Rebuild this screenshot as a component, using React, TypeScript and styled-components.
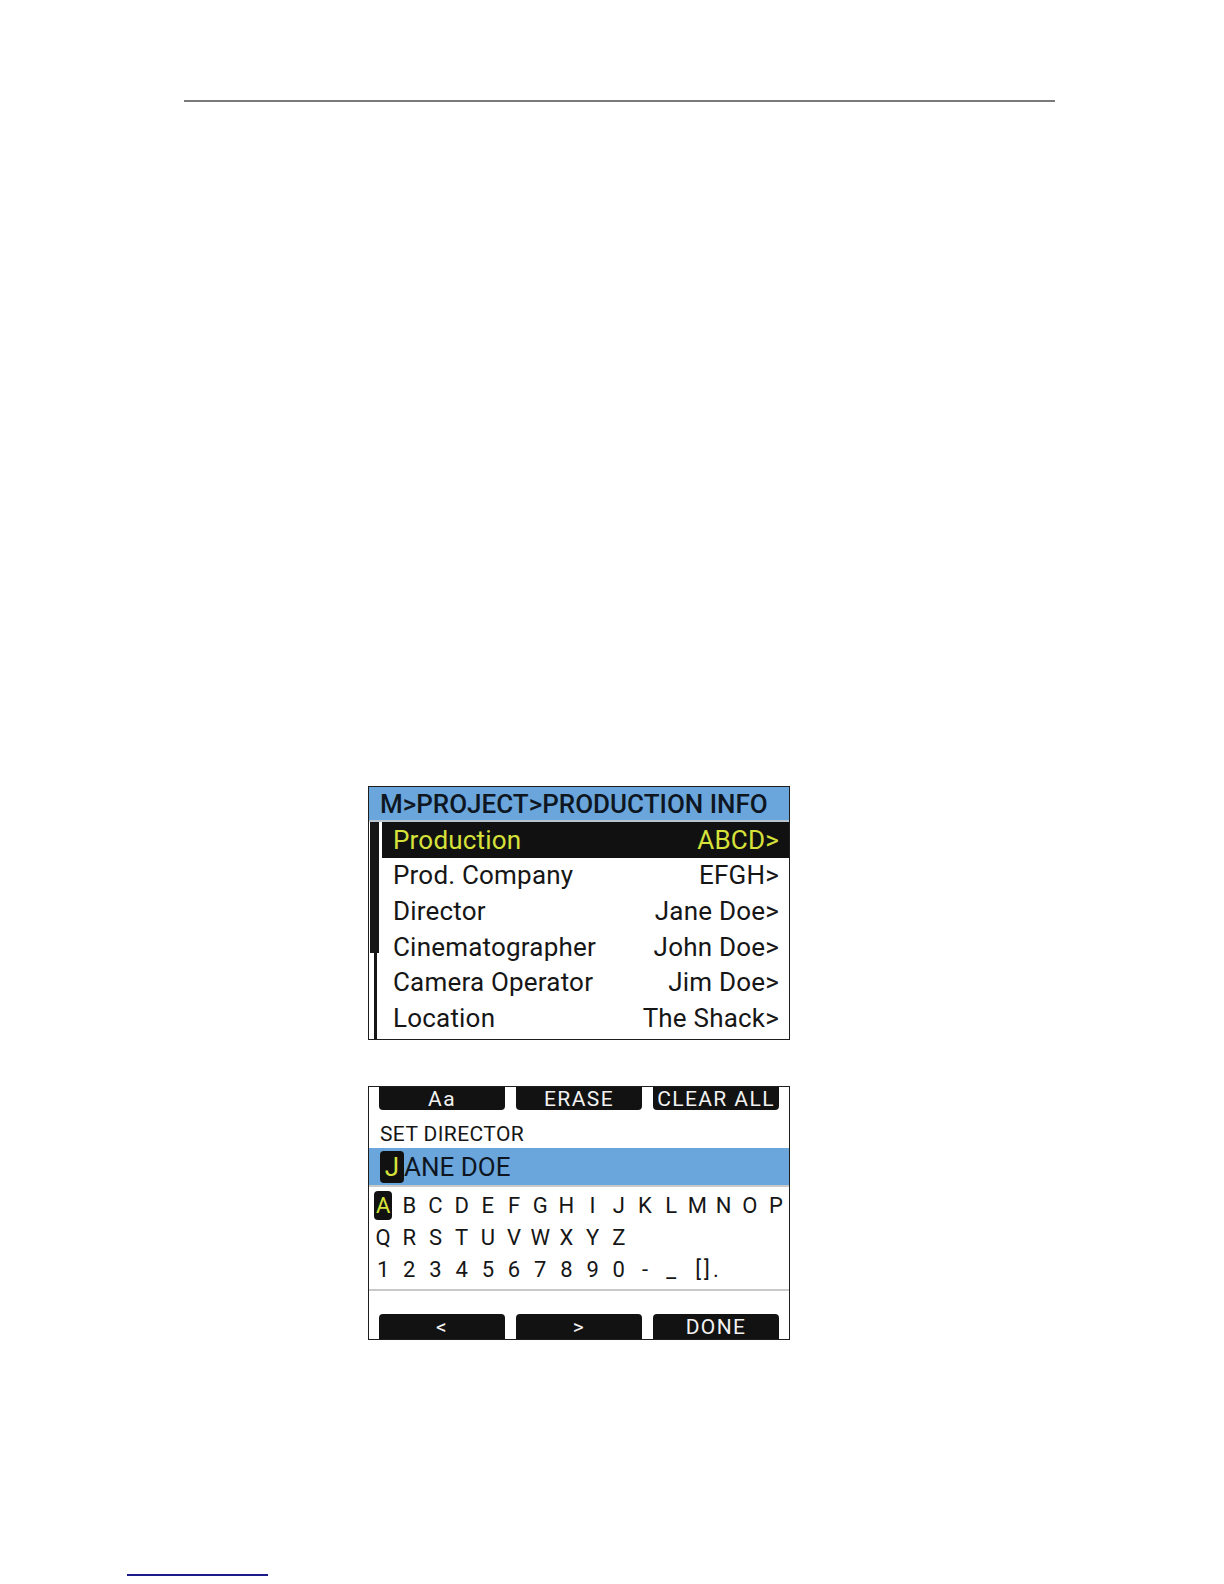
import React from "react";
import styled, {createGlobalStyle} from "styled-components";

const Blue = "#6aa6dc";
const Yellow = "#d6e13a";
const Ink = "#161616";
const Rule = "#c9c9c9";

const GlobalStyle = createGlobalStyle`
  html, body {
    margin: 0;
    padding: 0;
    background: #ffffff;
    overflow: hidden;
  }
  body {
    font-family: Roboto, "Liberation Sans", sans-serif;
    color: ${Ink};
  }
`;

const Page = styled.div`
  width: 1224px;
  height: 1584px;
  display: flex;
  flex-direction: column;
  padding-top: 100px;
  box-sizing: border-box;
  overflow: hidden;
`;

const HeaderRule = styled.hr`
  margin: 0 0 0 184px;
  width: 871px;
  height: 2px;
  border: none;
  background: #7a7a7a;
`;

const Screens = styled.div`
  display: flex;
  flex-direction: column;
  align-items: flex-start;
  padding-left: 368px;
  margin-top: 684px;
  gap: 46px;
`;

const Screen = styled.div`
  width: 422px;
  height: 254px;
  box-sizing: border-box;
  border: 1px solid #1e1e1e;
  display: flex;
  flex-direction: column;
  overflow: hidden;
  background: #fff;
`;

// --- menu screen ---

const MenuTitle = styled.div`
  height: 33px;
  flex-shrink: 0;
  background: ${Blue};
  border-bottom: 2px solid #b9c6cf;
  padding-left: 11px;
  display: flex;
  align-items: center;
  font-size: 26px;
  font-weight: 500;
  letter-spacing: 0;
  color: #0e1622;
`;

const MenuBody = styled.div`
  flex: 1;
  display: flex;
`;

const ScrollTrack = styled.div`
  width: 13px;
  flex-shrink: 0;
  position: relative;

  &::before {
    content: "";
    position: absolute;
    left: 5px;
    top: 0;
    bottom: 0;
    width: 3px;
    background: ${Ink};
  }
`;

const ScrollThumb = styled.div`
  position: absolute;
  left: 1px;
  top: 0;
  width: 9px;
  height: 131px;
  background: ${Ink};
`;

const MenuList = styled.ul`
  list-style: none;
  margin: 0;
  padding: 0;
  flex: 1;
  display: flex;
  flex-direction: column;
`;

const MenuRow = styled.li<{$selected?: boolean}>`
  height: 35.6px;
  display: flex;
  align-items: center;
  justify-content: space-between;
  padding: 0 10px 0 11px;
  font-size: 26px;
  letter-spacing: 0.2px;
  background: ${p => (p.$selected ? "#111" : "transparent")};
  color: ${p => (p.$selected ? Yellow : Ink)};
`;

// --- keyboard screen ---

const ButtonRow = styled.div<{$bottom?: boolean}>`
  display: flex;
  gap: 11px;
  padding: 0 10px;
  margin-top: ${p => (p.$bottom ? "auto" : "0")};
`;

const SoftKey = styled.div<{$bottom?: boolean}>`
  flex: 1;
  height: ${p => (p.$bottom ? "25px" : "23px")};
  background: #121212;
  color: #f2f2f2;
  border-radius: ${p => (p.$bottom ? "4px 4px 0 0" : "0 0 4px 4px")};
  display: flex;
  align-items: center;
  justify-content: center;
  font-size: 21px;
  letter-spacing: 1.4px;
`;

const Prompt = styled.div`
  height: 38px;
  box-sizing: border-box;
  display: flex;
  align-items: flex-end;
  padding: 0 0 2px 11px;
  font-size: 21px;
  letter-spacing: 0.4px;
`;

const InputBar = styled.div`
  height: 37px;
  background: ${Blue};
  border-bottom: 2px solid ${Rule};
  display: flex;
  align-items: center;
  padding-left: 11px;
  font-size: 26px;
  color: #0e1622;
`;

const Cursor = styled.span`
  display: inline-flex;
  align-items: center;
  justify-content: center;
  width: 24px;
  height: 32px;
  border-radius: 4px;
  background: #111;
  color: ${Yellow};
`;

const KeyGrid = styled.div`
  display: grid;
  grid-template-columns: repeat(16, 1fr);
  grid-auto-rows: 32px;
  padding: 2px 0 0 1px;
  border-bottom: 2px solid ${Rule};
  height: 104px;
  box-sizing: border-box;
  align-content: start;
`;

const Key = styled.span<{$active?: boolean; $wide?: boolean}>`
  display: flex;
  align-items: center;
  justify-content: ${p => (p.$wide ? "flex-start" : "center")};
  font-size: 22px;
  letter-spacing: ${p => (p.$wide ? "3px" : "0")};
  ${p => p.$wide && "grid-column: span 2; padding-left: 9px;"}

  & > i {
    font-style: normal;
    display: inline-flex;
    align-items: center;
    justify-content: center;
    padding: 0 2px;
    height: 29px;
    border-radius: 4px;
    background: ${p => (p.$active ? "#111" : "transparent")};
    color: ${p => (p.$active ? Yellow : Ink)};
  }
`;

const FooterLink = styled.div`
  margin: 234px 0 0 127px;
  width: 141px;
  height: 2px;
  background: #1b1b8c;
`;

const menuItems = [
    {label: "Production", value: "ABCD>"},
    {label: "Prod. Company", value: "EFGH>"},
    {label: "Director", value: "Jane Doe>"},
    {label: "Cinematographer", value: "John Doe>"},
    {label: "Camera Operator", value: "Jim Doe>"},
    {label: "Location", value: "The Shack>"},
];

const keyRows = [
    "ABCDEFGHIJKLMNOP".split(""),
    "QRSTUVWXYZ".split(""),
    "1234567890-_".split(""),
];

const App = () => {
    return (<>
        <GlobalStyle/>
        <Page>
            <HeaderRule/>
            <Screens>
                <Screen>
                    <MenuTitle>M&gt;PROJECT&gt;PRODUCTION INFO</MenuTitle>
                    <MenuBody>
                        <ScrollTrack>
                            <ScrollThumb/>
                        </ScrollTrack>
                        <MenuList>
                            {menuItems.map((item, i) => (
                                <MenuRow key={item.label} $selected={i === 0}>
                                    <span>{item.label}</span>
                                    <span>{item.value}</span>
                                </MenuRow>
                            ))}
                        </MenuList>
                    </MenuBody>
                </Screen>

                <Screen>
                    <ButtonRow>
                        <SoftKey>Aa</SoftKey>
                        <SoftKey>ERASE</SoftKey>
                        <SoftKey>CLEAR ALL</SoftKey>
                    </ButtonRow>
                    <Prompt>SET DIRECTOR</Prompt>
                    <InputBar>
                        <Cursor>J</Cursor>ANE DOE
                    </InputBar>
                    <KeyGrid>
                        {keyRows.map((row, r) => (
                            <React.Fragment key={r}>
                                {row.map((k, c) => (
                                    <Key key={k} $active={r === 0 && c === 0}><i>{k}</i></Key>
                                ))}
                                {r === 1 && <span style={{gridColumn: "span 6"}}/>}
                                {r === 2 && <Key $wide><i>[].</i></Key>}
                            </React.Fragment>
                        ))}
                    </KeyGrid>
                    <ButtonRow $bottom>
                        <SoftKey $bottom>&lt;</SoftKey>
                        <SoftKey $bottom>&gt;</SoftKey>
                        <SoftKey $bottom>DONE</SoftKey>
                    </ButtonRow>
                </Screen>
            </Screens>
            <FooterLink/>
        </Page>
    </>)
}

export default App;
